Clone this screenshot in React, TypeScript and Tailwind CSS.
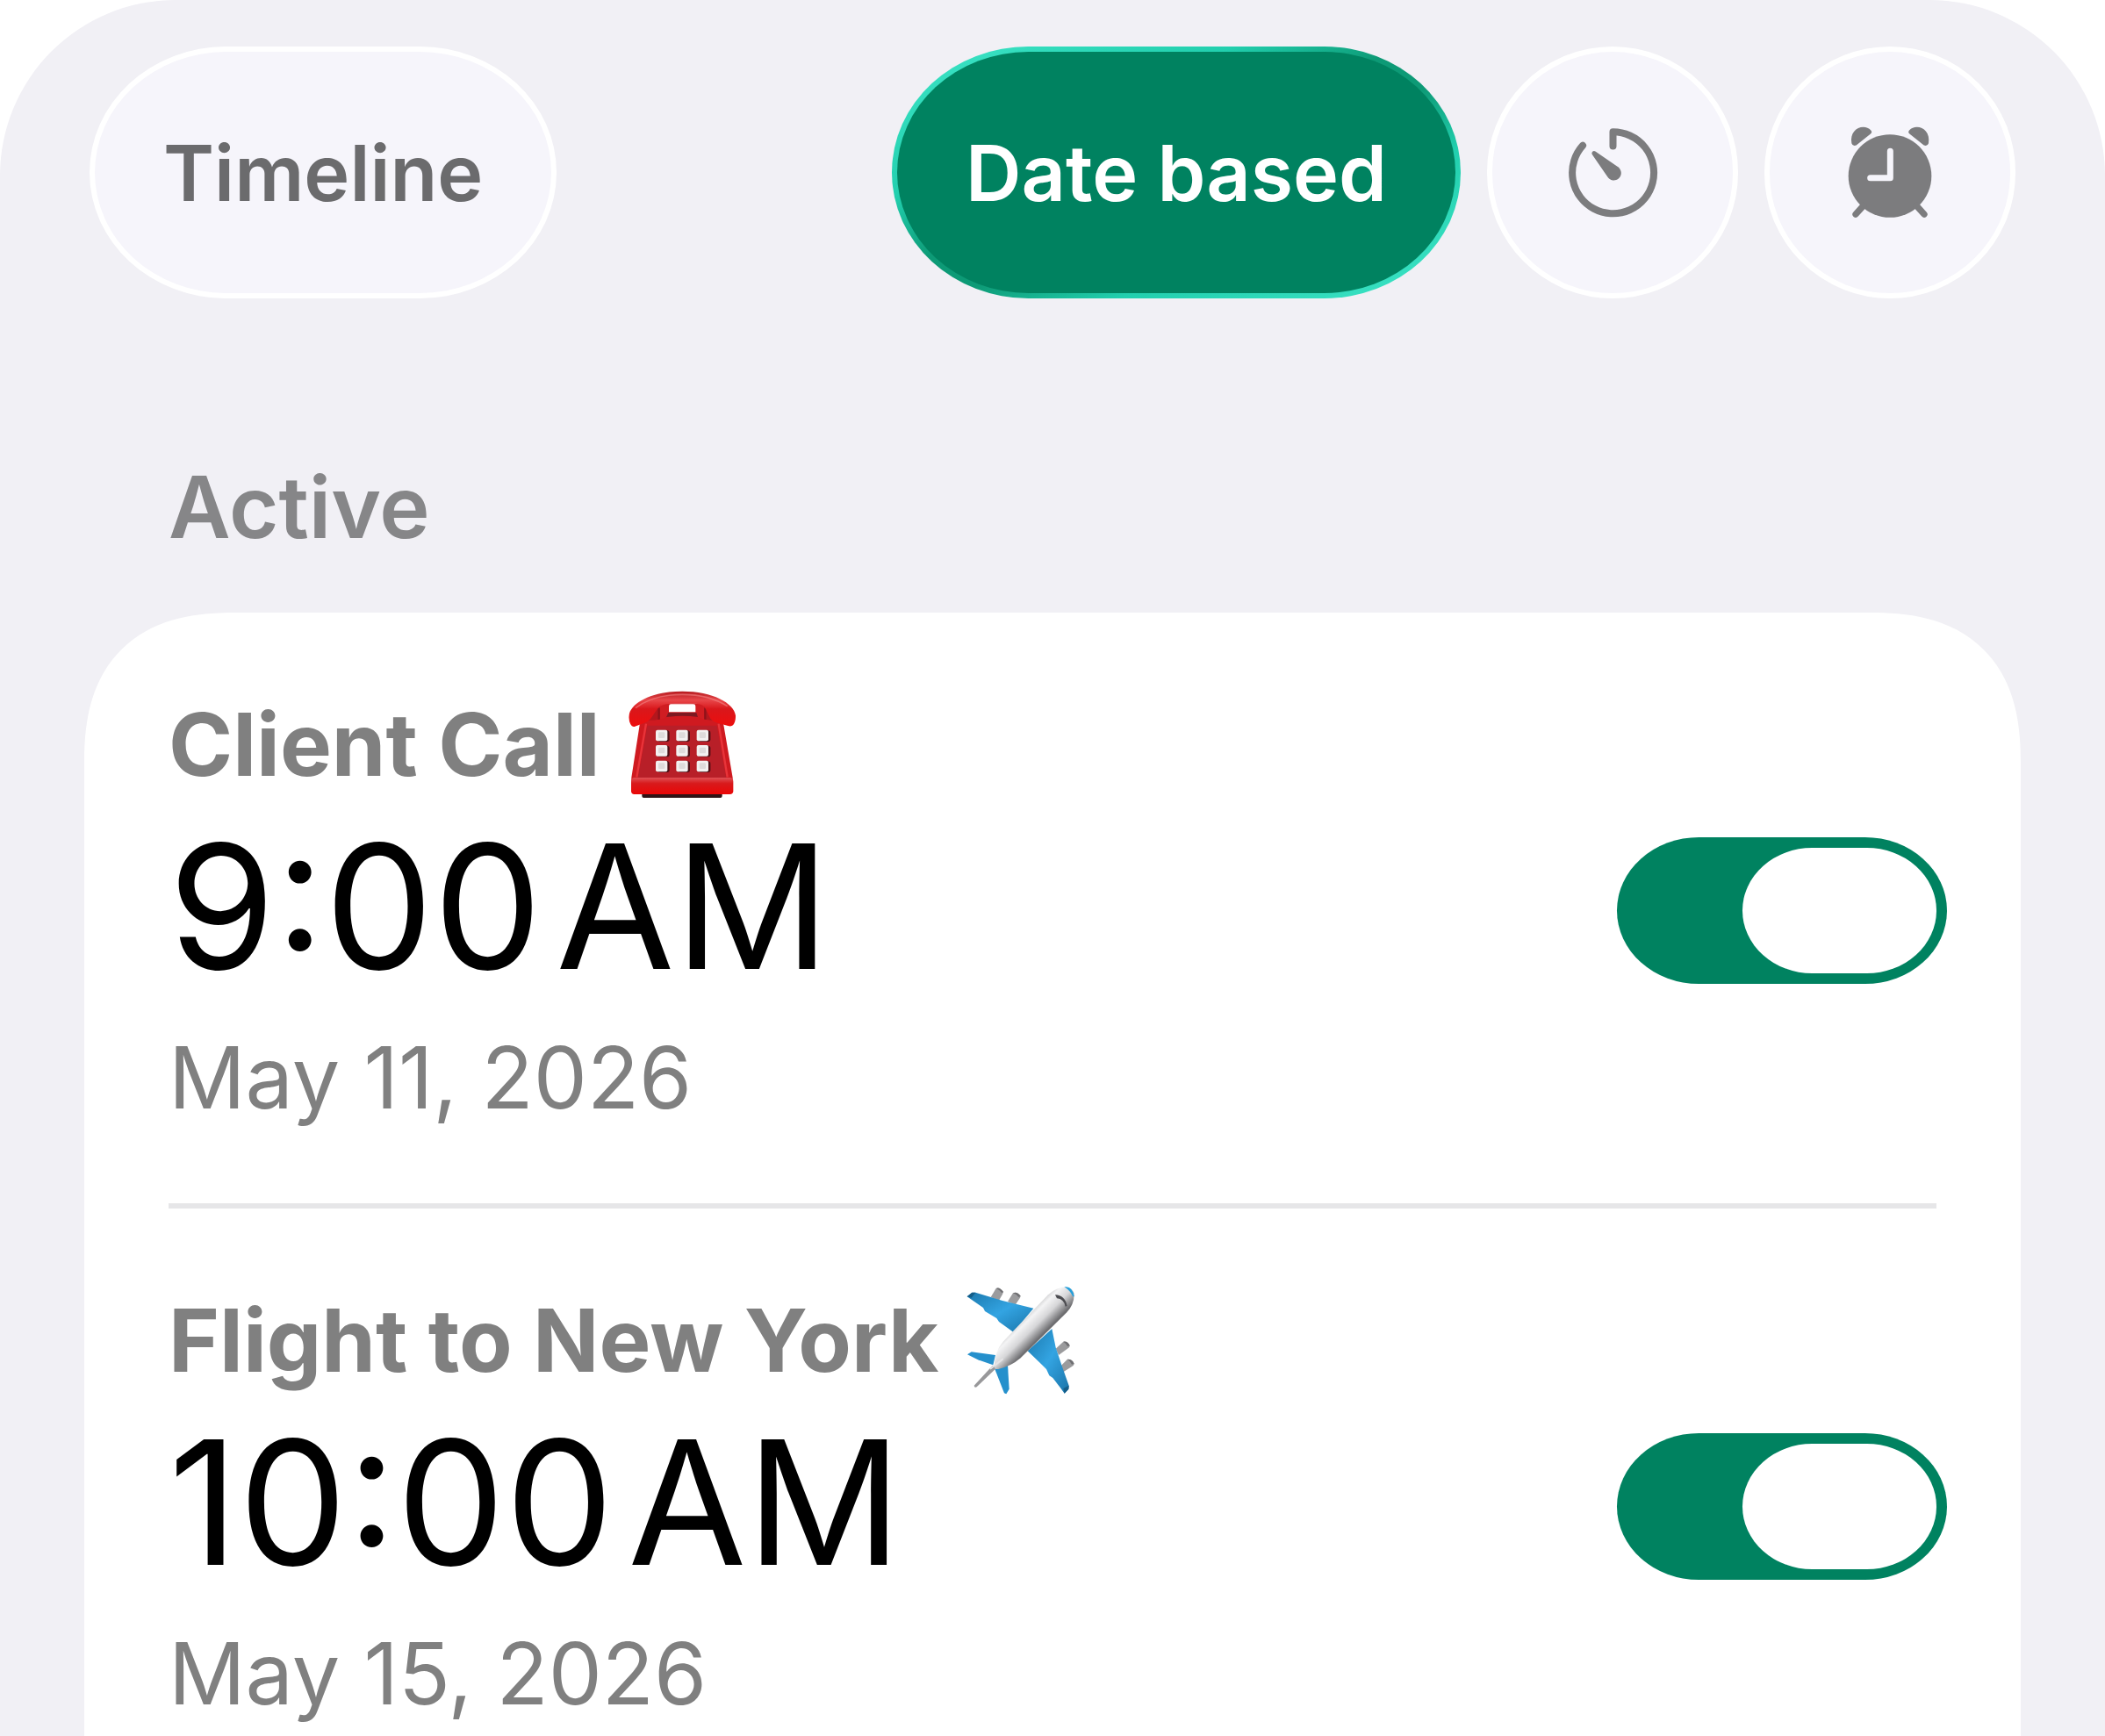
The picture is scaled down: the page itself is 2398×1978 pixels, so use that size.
import { useState } from 'react';
import type { ReactNode } from 'react';
import clsx from 'clsx';

interface Alarm {
  id: string;
  title: string;
  icon: ReactNode;
  time: string;
  period: string;
  date: string;
}

const ALARMS: Alarm[] = [
  { id: 'call', title: 'Client Call', icon: <PhoneEmoji />, time: '9:00', period: 'AM', date: 'May 11, 2026' },
  { id: 'flight', title: 'Flight to New York', icon: <PlaneEmoji />, time: '10:00', period: 'AM', date: 'May 15, 2026' }
];

export default function App() {
  return (
    <div className="min-h-screen bg-white font-['Inter',sans-serif]">
      <main className="flex min-h-screen flex-col rounded-t-[200px] bg-[#f1f0f5] px-24 pt-[53px]">
        <header className="flex items-center justify-between px-[6px]">
          <PillButton className="px-[78px] text-[#6b6b6d]">Timeline</PillButton>
          <div className="flex items-center gap-[30px]">
            <PillButton active className="px-[78px]">Date based</PillButton>
            <PillButton label="Timers" className="w-[286px]">
              <TimerIcon />
            </PillButton>
            <PillButton label="Alarms" className="w-[286px]">
              <AlarmIcon />
            </PillButton>
          </div>
        </header>

        <section className="mt-[178px] flex flex-1 flex-col">
          <h2 className="mb-[60px] px-24 text-[97px] leading-[120px] font-semibold text-[#868688]">Active</h2>
          <ul className="flex-1 rounded-t-[172px] bg-white px-24 [corner-shape:superellipse(1.3)]">
            {ALARMS.map((alarm, index) => (
              <AlarmRow key={alarm.id} alarm={alarm} last={index === ALARMS.length - 1} />
            ))}
          </ul>
        </section>
      </main>
    </div>
  );
}

interface PillButtonProps {
  children: ReactNode;
  className?: string;
  label?: string;
  active?: boolean;
}

function PillButton({ children, className, label, active = false }: PillButtonProps) {
  return (
    <button
      type="button"
      aria-label={label}
      aria-pressed={active}
      className={clsx(
        'flex h-[287px] items-center justify-center border-[6px] text-[88px] leading-none font-semibold',
        label ? 'rounded-full' : 'rounded-[156px/144px]',
        active
          ? 'border-transparent [background:linear-gradient(#008260,#008260)_padding-box,linear-gradient(to_bottom_right,#3fe6c8,#22cfae_30%,#0d9a76_45%,#0d9a76_55%,#22cfae_70%,#3fe6c8)_border-box] text-white'
          : 'border-white bg-[#f6f5fb]',
        className
      )}
    >
      {children}
    </button>
  );
}

function AlarmRow({ alarm, last }: { alarm: Alarm; last: boolean }) {
  const [enabled, setEnabled] = useState(true);
  const titleId = `alarm-${alarm.id}`;

  return (
    <li
      className={clsx(
        'flex items-center justify-between pt-[88px]',
        !last && 'border-b-[6px] border-[#e6e6e8] pb-[83px]'
      )}
    >
      <div>
        <h3 id={titleId} className="flex h-[124px] items-center gap-8 text-[99px] leading-[124px] font-bold text-[#808080]">
          {alarm.title}
          {alarm.icon}
        </h3>
        <p className="mt-[25px] flex gap-4 text-[196px] leading-[196px] text-black">
          <span>{alarm.time}</span> <span>{alarm.period}</span>
        </p>
        <p className="mt-[37px] text-[97px] leading-[120px] text-[#808080]">{alarm.date}</p>
      </div>
      <input
        type="checkbox"
        role="switch"
        aria-labelledby={titleId}
        checked={enabled}
        onChange={(event) => setEnabled(event.target.checked)}
        className="-mr-3 flex h-[167px] w-[376px] shrink-0 appearance-none rounded-[94px/84px] bg-[#c7c7cc] p-3 before:h-full before:w-[221px] before:rounded-[80px/72px] before:bg-white checked:justify-end checked:bg-[#008260]"
      />
    </li>
  );
}

function TimerIcon() {
  return (
    <svg viewBox="80 78 308 308" className="size-[103px]" fill="none" aria-hidden="true">
      <path
        d="M234 142V94A139 139 0 1 1 131 140"
        stroke="#7c7c7e"
        strokeWidth="24"
        strokeLinecap="round"
        strokeLinejoin="round"
      />
      <path d="M163 171A8 8 0 0 1 174 160L249 212A25 25 0 1 1 215 246Z" fill="#7c7c7e" />
    </svg>
  );
}

function AlarmIcon() {
  const bell = 'M118 130C112 96 134 75 158 75C168 75 177 79 184 86Q190 93 182 99L134 137Q122 142 118 130Z';
  return (
    <svg viewBox="105 73 288 314" className="h-[105px] w-24" fill="#7c7c7e" aria-hidden="true">
      <circle cx="249" cy="242" r="142" />
      <path d={bell} />
      <path d={bell} transform="matrix(-1 0 0 1 499 0)" />
      <path d="M158 344L132 373M340 344L366 373" stroke="#7c7c7e" strokeWidth="22" strokeLinecap="round" />
      <path d="M250 157V249H182" fill="none" stroke="#f6f5fb" strokeWidth="21" strokeLinecap="round" strokeLinejoin="round" />
    </svg>
  );
}

function PhoneEmoji() {
  return (
    <svg viewBox="74 53 369 369" className="size-[123px]" role="img" aria-label="telephone">
      <defs>
        <linearGradient id="phone-handset" x1="0" y1="0" x2="0" y2="1">
          <stop offset="0" stopColor="#b51a1e" />
          <stop offset="0.25" stopColor="#e8474a" />
          <stop offset="0.5" stopColor="#d9171b" />
          <stop offset="1" stopColor="#ee0d0d" />
        </linearGradient>
        <linearGradient id="phone-base" x1="0" y1="0" x2="0" y2="1">
          <stop offset="0" stopColor="#e05055" />
          <stop offset="0.35" stopColor="#d81a1c" />
          <stop offset="1" stopColor="#ea0606" />
        </linearGradient>
      </defs>
      <path d="M120 400H394V413Q394 419 388 419H126Q120 419 120 413Z" fill="#301315" />
      <path d="M160 100H354L384 160H130Z" fill="#b3171d" />
      <path d="M182 96H332L338 158H176Z" fill="#d01d22" />
      <path d="M212 106Q212 99 219 99H296Q303 99 303 106V126H212Z" fill="#fff" />
      <path d="M210 128H306L312 146H202Z" fill="#7d1a22" />
      <path d="M178 112V152M336 112V154" stroke="#8f131a" strokeWidth="7" />
      <path d="M138 154Q190 154 204 143Q258 136 312 143Q326 154 376 154Q395 155 399 170L430 350V385H84V350L112 170Q117 154 138 154Z" fill="#cf1a20" />
      <path d="M138 172H376L408 350H106Z" fill="#b81f28" />
      <path d="M134 166L102 348M382 166L412 348" stroke="#e8343a" strokeWidth="7" />
      <path d="M92 350H422Q432 352 432 364V396Q432 407 420 407H94Q83 407 83 396V364Q83 352 92 350Z" fill="url(#phone-base)" />
      <path
        d="M76 138C80 95 155 55 258 55C361 55 435 95 440 138C441 153 436 166 431 171Q425 176 414 173L378 163Q362 158 354 148L338 116C330 99 316 96 258 96C200 96 185 99 172 116L150 148Q142 158 128 163L96 175Q86 178 81 168Q74 154 76 138Z"
        fill="url(#phone-handset)"
      />
      <path d="M98 112Q160 66 258 66Q350 66 412 106" fill="none" stroke="#f58a8a" strokeOpacity="0.55" strokeWidth="5" />
      {[187, 239, 292].map((y) =>
        [167, 237, 307].map((x) => (
          <g key={`${x}-${y}`}>
            <rect x={x + 6} y={y + 2} width="41" height="38" rx="8" fill="#4a1116" />
            <rect x={x} y={y} width="40" height="38" rx="6" fill="#f3f1f1" />
            <rect x={x + 9} y={y + 8} width="22" height="20" rx="4" fill="#dedbdb" />
          </g>
        ))
      )}
    </svg>
  );
}

function PlaneEmoji() {
  return (
    <svg viewBox="67 50 369 369" className="size-[123px]" role="img" aria-label="airplane">
      <defs>
        <linearGradient id="plane-body" gradientUnits="userSpaceOnUse" x1="240" y1="150" x2="315" y2="225">
          <stop offset="0" stopColor="#a9a9ab" />
          <stop offset="0.35" stopColor="#f4f4f5" />
          <stop offset="0.65" stopColor="#d6d6d8" />
          <stop offset="1" stopColor="#6e6e71" />
        </linearGradient>
        <linearGradient id="plane-wing" x1="0" y1="0" x2="1" y2="1">
          <stop offset="0" stopColor="#1b78ad" />
          <stop offset="0.5" stopColor="#33a4e2" />
          <stop offset="1" stopColor="#1973a8" />
        </linearGradient>
      </defs>
      <g fill="#9b9b9d">
        <path d="M150 86L168 56Q180 50 193 68L190 76L178 97Z" />
        <path d="M208 101L226 72Q240 66 252 82L250 88L234 112Z" />
        <path d="M372 262L398 238Q414 236 420 252L418 258L382 284Z" />
        <path d="M388 322L412 298Q430 298 435 314L432 320L398 342Z" />
      </g>
      <g fill="#6f6f72">
        <path d="M168 56Q180 50 193 68L188 72Q180 60 168 56Z" />
        <path d="M226 72Q240 66 252 82L246 86Q238 76 226 72Z" />
        <path d="M398 238Q414 236 420 252L412 254Q408 244 398 238Z" />
        <path d="M412 298Q430 298 435 314L427 316Q422 304 412 298Z" />
      </g>
      <path d="M69 84L86 70L98 70L190 98L296 124L228 206L178 170L170 158L130 134L124 122Z" fill="url(#plane-wing)" />
      <path d="M359 194L372 258L392 318L417 388L416 400L402 415L388 396L362 362L350 354L340 332L318 310L276 270Z" fill="url(#plane-wing)" />
      <path d="M69 84L86 70L98 70L84 88ZM402 415L416 400L417 388L398 398Z" fill="#145d88" />
      <path d="M70 282L84 273L166 284L158 318L106 300Z" fill="#2590cc" />
      <path d="M164 332L208 318L213 400L203 417L196 414Z" fill="#2590cc" />
      <path d="M93 388L156 320L174 324L102 393Q94 397 93 388Z" fill="#98989a" />
      <path
        d="M162 322Q164 270 192 238L346 78Q376 50 412 52Q430 56 434 72Q438 106 410 138L252 294Q220 322 176 332Q162 334 162 322Z"
        fill="url(#plane-body)"
      />
      <path d="M408 53Q428 54 433 84Q424 64 408 53Z" fill="#25a0dc" stroke="#25a0dc" strokeWidth="4" />
      <path d="M370 78Q404 80 411 116L405 118Q400 92 376 90Z" fill="#4c4c50" />
      <path d="M150 330L190 298" stroke="#e4e4e6" strokeWidth="6" strokeLinecap="round" />
    </svg>
  );
}
